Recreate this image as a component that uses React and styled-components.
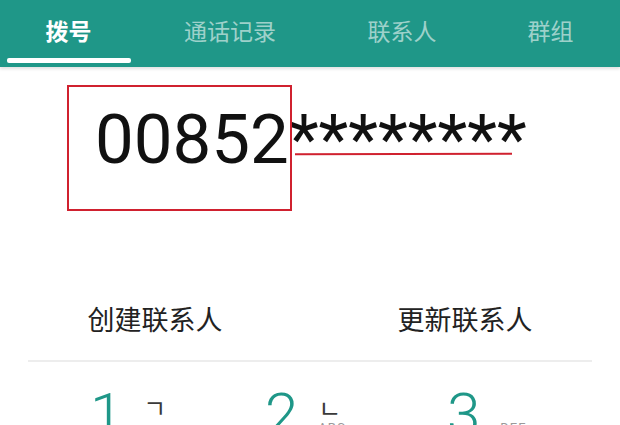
import React from "react";
import styled, { createGlobalStyle } from "styled-components";

const GlobalStyle = createGlobalStyle`
	html, body {
		margin: 0;
		padding: 0;
		background: #ffffff;
		overflow: hidden;
	}
	body {
		font-family: Roboto, "Noto Sans CJK SC", sans-serif;
	}
`;

const Page = styled.div`
	width: 620px;
	height: 425px;
	overflow: hidden;
	background: #ffffff;
`;

const TabBar = styled.div`
	display: flex;
	height: 67px;
	background: #1f9788;
	box-shadow: 0 2px 3px rgba(0, 0, 0, 0.12);
	position: relative;
	z-index: 1;
`;

const Tab = styled.div`
	width: ${(p) => p.$width}px;
	display: flex;
	flex-direction: column;
	align-items: center;
	padding-top: 17px;
	box-sizing: border-box;
`;

const TabLabel = styled.span`
	font-family: "Noto Sans CJK SC", sans-serif;
	font-size: 23px;
	line-height: 27px;
	font-weight: ${(p) => (p.$active ? 700 : 400)};
	color: ${(p) => (p.$active ? "#ffffff" : "rgba(255, 255, 255, 0.58)")};
`;

const Indicator = styled.div`
	margin-top: 14px;
	width: 124px;
	height: 5px;
	border-radius: 2px;
	background: #ffffff;
`;

const NumberArea = styled.div`
	position: relative;
	height: 222px;
	padding-top: 39px;
	padding-left: 95px;
	box-sizing: border-box;
`;

const DialedNumber = styled.div`
	font-family: Roboto, sans-serif;
	font-size: 69px;
	line-height: 68px;
	color: #111111;
	white-space: nowrap;
`;

const MarkBox = styled.div`
	position: absolute;
	left: 67px;
	top: 18px;
	width: 225px;
	height: 126px;
	border: 2px solid #d0212f;
	box-sizing: border-box;
`;

const MarkLine = styled.div`
	position: absolute;
	left: 295px;
	top: 86px;
	width: 217px;
	height: 2px;
	background: #d0212f;
	transform: rotate(-0.15deg);
`;

const ActionRow = styled.div`
	display: flex;
	height: 54px;
	padding-top: 16px;
	box-sizing: border-box;
`;

const Action = styled.div`
	flex: 1;
	text-align: center;
	font-family: "Noto Sans CJK SC", sans-serif;
	font-size: 27px;
	line-height: 27px;
	color: #222222;
`;

const Divider = styled.div`
	margin: 17px 28px 0;
	height: 2px;
	background: #ededed;
`;

const Keypad = styled.div`
	display: grid;
	grid-template-columns: repeat(3, 1fr);
	margin: 0 28px;
	padding-top: 23px;
`;

const Key = styled.div`
	display: flex;
	align-items: flex-start;
	padding-left: ${(p) => p.$offset}px;
`;

const Digit = styled.span`
	font-family: Roboto, sans-serif;
	font-weight: 300;
	font-size: 60px;
	line-height: 60px;
	color: #1f9788;
`;

const KeySide = styled.div`
	display: flex;
	flex-direction: column;
	margin-left: 20px;
	padding-top: 11px;
	min-width: 40px;
`;

const Jamo = styled.span`
	font-family: "Noto Sans CJK KR", sans-serif;
	font-size: 25px;
	line-height: 22px;
	color: #3a3a3a;
`;

const Letters = styled.span`
	margin-top: 2px;
	font-family: Roboto, sans-serif;
	font-size: 13px;
	line-height: 15px;
	color: #9a9a9a;
	letter-spacing: 1px;
`;

const tabs = [
	{ label: "拨号", width: 137, active: true },
	{ label: "通话记录", width: 186 },
	{ label: "联系人", width: 158 },
	{ label: "群组", width: 139 },
];

const keys = [
	{ digit: "1", jamo: "ㄱ", letters: "", offset: 62 },
	{ digit: "2", jamo: "ㄴ", letters: "ABC", offset: 49 },
	{ digit: "3", jamo: "\u00a0", letters: "DEF", offset: 43 },
];

export default function App() {
	return (
		<>
			<GlobalStyle />
			<Page>
				<TabBar>
					{tabs.map((t) => (
						<Tab key={t.label} $width={t.width}>
							<TabLabel $active={t.active}>{t.label}</TabLabel>
							{t.active && <Indicator />}
						</Tab>
					))}
				</TabBar>
				<NumberArea>
					<DialedNumber>00852********</DialedNumber>
					<MarkBox />
					<MarkLine />
				</NumberArea>
				<ActionRow>
					<Action>创建联系人</Action>
					<Action>更新联系人</Action>
				</ActionRow>
				<Divider />
				<Keypad>
					{keys.map((k) => (
						<Key key={k.digit} $offset={k.offset}>
							<Digit>{k.digit}</Digit>
							<KeySide>
								<Jamo>{k.jamo}</Jamo>
								<Letters>{k.letters}</Letters>
							</KeySide>
						</Key>
					))}
				</Keypad>
			</Page>
		</>
	);
}
